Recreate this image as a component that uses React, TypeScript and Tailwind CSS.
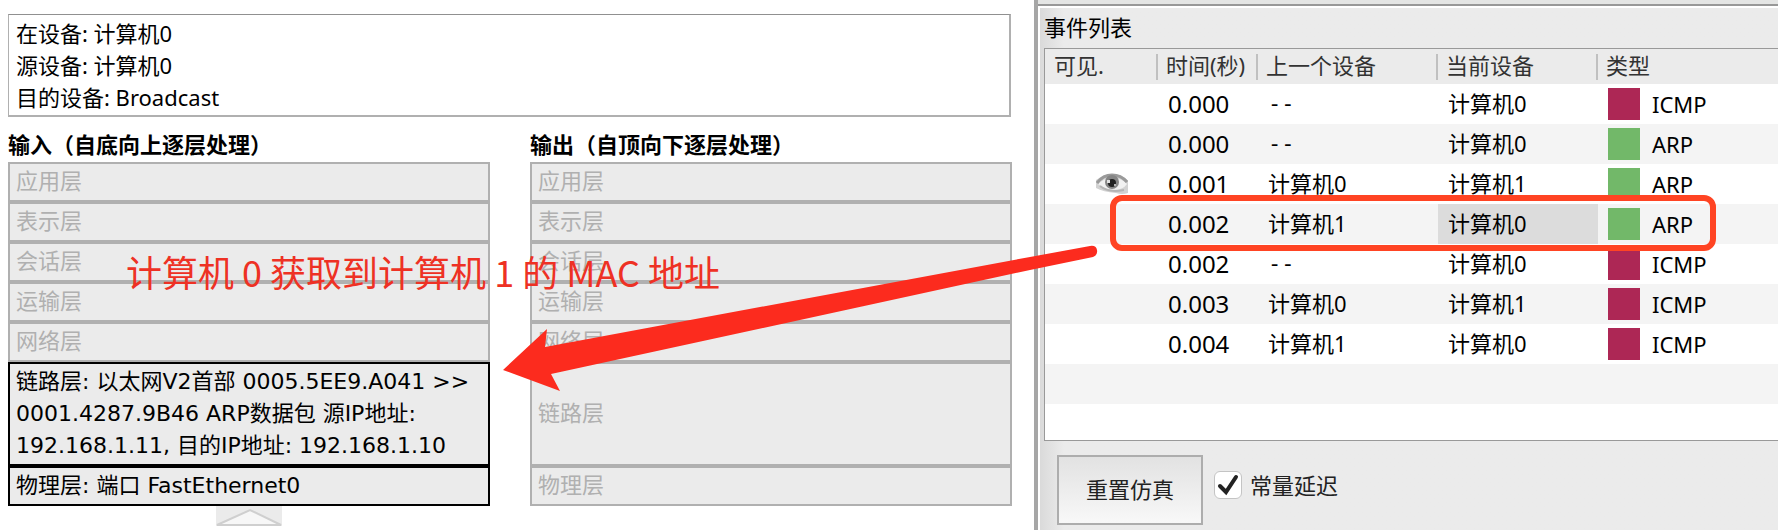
import React from "react";

const uiFont = "font-['Noto_Sans','Noto_Sans_CJK_SC',sans-serif]";
const wideFont = "font-['DejaVu_Sans','Noto_Sans_CJK_SC',sans-serif]";
const dashFont = "font-['DejaVu_Sans_Mono',monospace]";
const noteFont = "font-['Noto_Sans_CJK_SC',sans-serif]";

type LayerItem = { text: string; active?: boolean; tall?: boolean };

const upperLayers: LayerItem[] = [
  { text: "应用层" },
  { text: "表示层" },
  { text: "会话层" },
  { text: "运输层" },
  { text: "网络层" },
];

const inLayers: LayerItem[] = [
  ...upperLayers,
  {
    text: "链路层: 以太网V2首部 0005.5EE9.A041 >> 0001.4287.9B46 ARP数据包 源IP地址: 192.168.1.11, 目的IP地址: 192.168.1.10",
    active: true,
    tall: true,
  },
  { text: "物理层: 端口 FastEthernet0", active: true },
];

const outLayers: LayerItem[] = [...upperLayers, { text: "链路层", tall: true }, { text: "物理层" }];

type SimEvent = { time: string; last: string; at: string; type: "ICMP" | "ARP"; visible?: boolean; selected?: boolean };

const events: SimEvent[] = [
  { time: "0.000", last: "--", at: "计算机0", type: "ICMP" },
  { time: "0.000", last: "--", at: "计算机0", type: "ARP" },
  { time: "0.001", last: "计算机0", at: "计算机1", type: "ARP", visible: true },
  { time: "0.002", last: "计算机1", at: "计算机0", type: "ARP", selected: true },
  { time: "0.002", last: "--", at: "计算机0", type: "ICMP" },
  { time: "0.003", last: "计算机0", at: "计算机1", type: "ICMP" },
  { time: "0.004", last: "计算机1", at: "计算机0", type: "ICMP" },
];

function LayerColumn({ title, layers }: { title: string; layers: LayerItem[] }) {
  return (
    <section className="min-w-0 flex-1">
      <h2 className="h-8 whitespace-nowrap text-[22px] leading-[30px] font-bold">{title}</h2>
      <ul className="mt-[1px]">
        {layers.map((layer) => (
          <li
            key={layer.text}
            className={`flex items-center border-2 bg-[#ebebeb] pl-[6px] text-[22px] leading-8 ${
              layer.tall ? "h-[104px]" : "h-10"
            } ${layer.active ? `border-black text-black ${wideFont}` : "border-[#b0b0b0] pb-1 text-[#b0b0b0]"}`}
          >
            <span>{layer.text}</span>
          </li>
        ))}
      </ul>
    </section>
  );
}

function EyeIcon() {
  return (
    <svg width="32" height="22" viewBox="0 0 32 22" role="img" aria-label="可见" className="ml-auto block">
      <path d="M0 7 Q8 1 16 1 Q26 1 32 8 L32 20 Q26 22 20 20 Q7 19 0 15Z" fill="#d2d2d2" />
      <path d="M2 11 Q8 5 16 5 Q26 5 31 11 Q27 17 17 17 Q8 16 2 11Z" fill="#f1f1f1" />
      <path d="M1 10 Q7 2 16 2 Q25 2 31 9" fill="none" stroke="#9a9a9a" strokeWidth="3" />
      <path d="M4 13 Q12 20 28 17" fill="none" stroke="#b4b4b4" strokeWidth="2" />
      <circle cx="16" cy="9" r="7" fill="#858585" />
      <circle cx="16" cy="10" r="4" fill="#222222" />
      <rect x="11" y="7" width="3" height="3" fill="#e0e0e0" />
      <rect x="18" y="11" width="2" height="2" fill="#b5b5b5" />
    </svg>
  );
}

function HeaderCell({ label, first, last }: { label: string; first?: boolean; last?: boolean }) {
  return (
    <th className="p-0 text-left font-normal">
      <div
        className={`h-[26px] whitespace-nowrap leading-[22px] ${first ? "pl-[9px]" : "pl-2"} ${
          last ? "" : "border-r-2 border-[#c0c0c0]"
        }`}
      >
        {label}
      </div>
    </th>
  );
}

function EventTable() {
  return (
    <div className="h-[393px] overflow-hidden border-t border-b border-l border-[#999999] bg-white">
      <table className="w-full table-fixed border-collapse text-[22px]">
        <colgroup>
          <col className="w-[113px]" />
          <col className="w-[100px]" />
          <col className="w-[180px]" />
          <col className="w-[160px]" />
          <col />
        </colgroup>
        <thead>
          <tr className="h-[35px] bg-[#ebebeb] text-[#333333]">
            <HeaderCell label="可见." first />
            <HeaderCell label="时间(秒)" />
            <HeaderCell label="上一个设备" />
            <HeaderCell label="当前设备" />
            <HeaderCell label="类型" last />
          </tr>
        </thead>
        <tbody>
          {events.map((e, i) => (
            <tr key={i} className="h-10 odd:bg-white even:bg-[#f4f4f4]">
              <td className="p-0 pr-[30px]">{e.visible && <EyeIcon />}</td>
              <td className="p-0 pl-[10px] text-2xl leading-8">{e.time}</td>
              <td className={`p-0 pl-[10px] leading-8 ${e.last === "--" ? dashFont : "pb-[2px]"}`}>{e.last}</td>
              <td className={`p-0 pb-[2px] pl-[10px] leading-8 ${e.selected ? "bg-[#dcdcdc]" : ""}`}>{e.at}</td>
              <td className="p-0 pl-[10px] leading-8">
                <div className="flex items-center gap-3">
                  <span className={`size-8 ${e.type === "ARP" ? "bg-[#72b869]" : "bg-[#ad2755]"}`} />
                  {e.type}
                </div>
              </td>
            </tr>
          ))}
          <tr className="h-10 bg-[#f4f4f4]">
            <td colSpan={5} />
          </tr>
        </tbody>
      </table>
    </div>
  );
}

export default function App() {
  return (
    <div className={`relative overflow-hidden bg-white text-black ${uiFont}`}>
      <div className="grid min-h-screen grid-cols-[1034fr_744fr]">
        <main className="pt-[14px] pr-[22px] pl-2">
          <div className="mr-[1px] h-[103px] border-t border-r-2 border-b-2 border-l border-[#b0b0b0] border-t-[#909090] pt-[2px] pl-[7px] text-[22px] leading-8">
            <p>在设备: 计算机0</p>
            <p>源设备: 计算机0</p>
            <p>目的设备: Broadcast</p>
          </div>
          <div className="mt-3 flex gap-10">
            <LayerColumn title="输入（自底向上逐层处理）" layers={inLayers} />
            <LayerColumn title="输出（自顶向下逐层处理）" layers={outLayers} />
          </div>
          <button type="button" aria-label="收起" className="ml-[208px] block h-5 w-[66px] bg-[#ebebeb]">
            <svg viewBox="0 0 66 20" className="block h-5 w-full">
              <path d="M1 19 L34 4 L65 19Z" fill="#f7f7f7" stroke="#cfcfcf" strokeWidth="2" />
            </svg>
          </button>
        </main>

        <aside className="flex min-w-0 flex-col border-l-4 border-[#a6a6a6] bg-[#ebebeb]">
          <div className="h-[6px] border-b-2 border-[#989898] bg-[#e4e5e4]" />
          <div className="flex-1 border-t-2 border-l-2 border-white bg-linear-to-r from-[#dadada] to-[#ebebeb] to-[24px] pl-1">
            <h2 className="h-10 text-[22px] leading-[38px]">事件列表</h2>
            <EventTable />
            <div className="flex items-start pt-[14px] pl-[13px]">
              <button
                type="button"
                className="h-[70px] w-[146px] border-2 border-[#adadad] bg-linear-to-b from-[#e2e2e2] to-[#f8f8f8] pb-[2px] text-[22px] text-[#222222]"
              >
                重置仿真
              </button>
              <label className="mt-[15px] ml-[11px] flex items-start gap-2 text-[22px] leading-[30px] text-[#222222]">
                <span className="relative mt-[1px] block size-7">
                  <input
                    type="checkbox"
                    defaultChecked
                    className="peer block size-7 appearance-none rounded-md border border-[#c4c4c4] bg-white"
                  />
                  <svg viewBox="0 0 28 28" className="pointer-events-none absolute inset-0 hidden peer-checked:block">
                    <path d="M6 15 L12 21 L22 6" fill="none" stroke="#222222" strokeWidth="4" strokeLinecap="round" />
                  </svg>
                </span>
                常量延迟
              </label>
            </div>
          </div>
        </aside>
      </div>

      <div className="pointer-events-none absolute top-[195px] left-[1110px] h-14 w-[606px] rounded-xl border-[6px] border-[#ff4423]" />
      <p className={`pointer-events-none absolute top-[246px] left-[126px] text-4xl leading-[50px] whitespace-nowrap text-[#ee3124] ${noteFont}`}>
        计算机 0 获取到计算机 1 的 MAC 地址
      </p>
      <svg width="1778" height="530" viewBox="0 0 1778 530" aria-hidden="true" className="pointer-events-none absolute top-0 left-0">
        <path
          d="M503 370 L547 329 L545 347 L1030 257 L1090 246 Q1096 245 1097 250 Q1098 255 1093 257 L1030 270 L551 374 L560 391Z"
          fill="#fc2b1e"
        />
      </svg>
    </div>
  );
}
